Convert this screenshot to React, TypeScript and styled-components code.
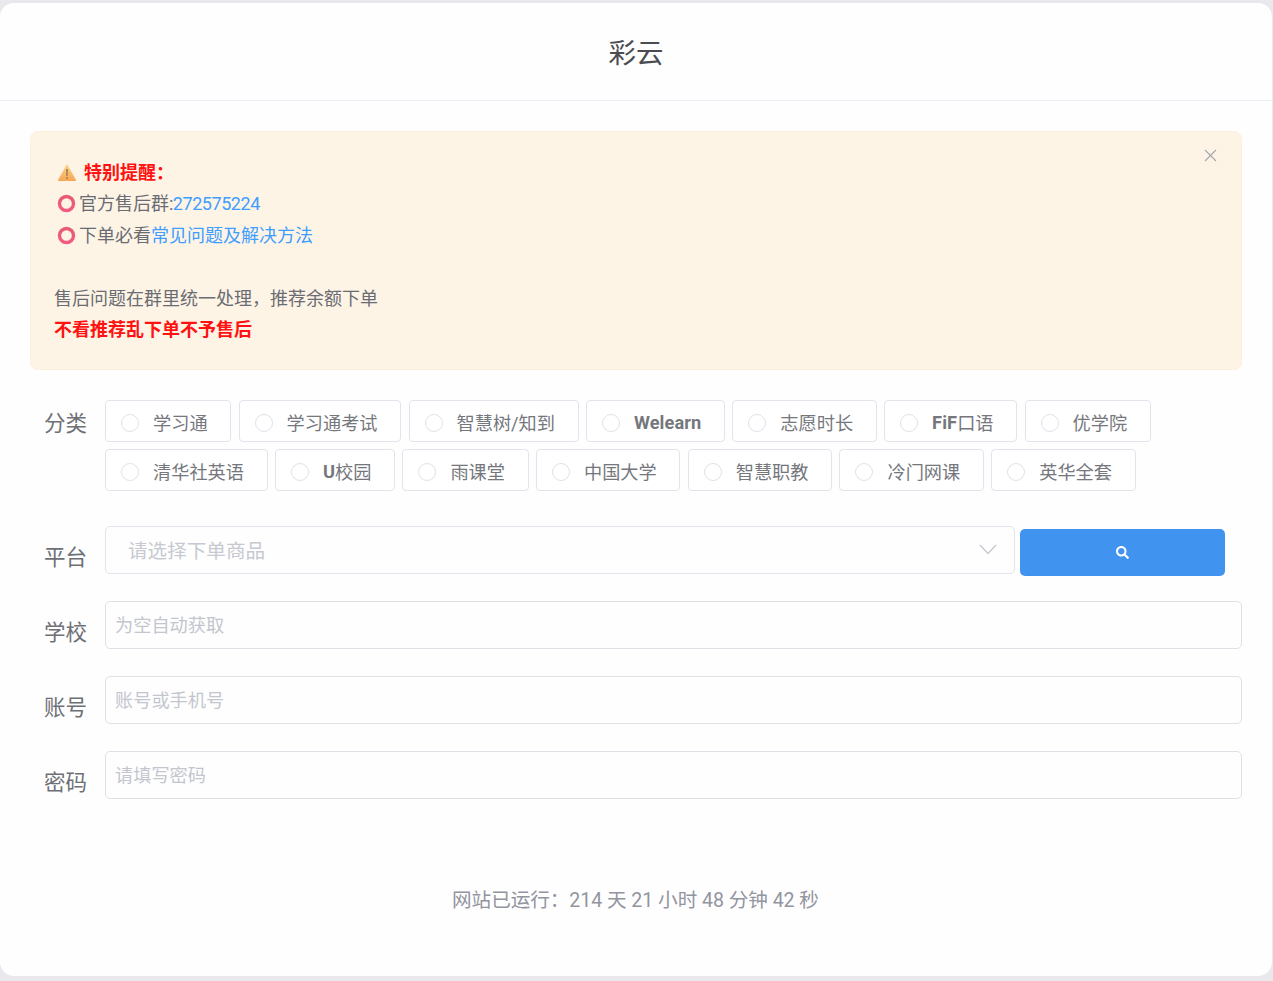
import styled, { createGlobalStyle } from 'styled-components';
import { FaSearch } from 'react-icons/fa';

const GlobalStyle = createGlobalStyle`
  * { box-sizing: border-box; }
  html, body { margin: 0; padding: 0; background: #e8e8ed; }
  body {
    font-family: Roboto, "Noto Sans CJK SC", sans-serif;
    color: #6a6c73;
  }
`;

const Page = styled.div`
  display: flex;
  height: 981px;
  overflow: hidden;
  padding: 3px 1px 5px 0;
`;

const Card = styled.main`
  flex: 1;
  display: flex;
  flex-direction: column;
  background: #fefefe;
  border-radius: 14px;
`;

const Header = styled.header`
  height: 98px;
  flex-shrink: 0;
  display: flex;
  align-items: center;
  justify-content: center;
  padding-bottom: 1px;
  border-bottom: 1px solid #eceef5;
  font-size: 27.5px;
  color: #4a4c52;
`;

const Body = styled.div`
  padding: 30px 30px 0;
`;

const Alert = styled.section`
  position: relative;
  height: 239px;
  padding: 24.5px 25px;
  background: #fef4e6;
  border: 1px solid #fcefdc;
  border-radius: 8px;
  font-size: 18px;
  line-height: 31.5px;
  margin-bottom: 30px;
`;

const Line = styled.div<{ $indent?: boolean }>`
  display: flex;
  align-items: center;
  height: 31.5px;
  margin-left: ${(p) => (p.$indent ? '1px' : '-2px')};
`;

const Strong = styled.strong`
  color: #ff1212;
  font-weight: 700;
`;

const Link = styled.a`
  color: #409eff;
`;

const Digits = styled(Link)`
  margin-left: -0.5px;
  letter-spacing: -0.45px;
`;

const CloseIcon = styled.svg`
  position: absolute;
  top: 17px;
  right: 24px;
  width: 13px;
  height: 13px;
`;

const Row = styled.div<{ $mb: number }>`
  display: flex;
  padding-left: 14px;
  margin-bottom: ${(p) => p.$mb}px;
`;

const Label = styled.label<{ $offset: number }>`
  flex: 0 0 61px;
  font-size: 21.5px;
  line-height: 32px;
  color: #6e7076;
  margin-top: ${(p) => p.$offset}px;
`;

const Options = styled.div`
  flex: 1;
  display: flex;
  flex-wrap: wrap;
  gap: 7px 7.3px;
  padding-right: 80px;
`;

const Option = styled.div`
  display: flex;
  align-items: center;
  height: 42px;
  padding: 2px 22.7px 0 15px;
  background: #fff;
  border: 1px solid #e2e4ec;
  border-radius: 4px;
  font-size: 18.2px;
  color: #75777d;
  white-space: nowrap;
`;

const Latin = styled.b`
  font-weight: 700;
  letter-spacing: 0.1px;
`;

const Circle = styled.span`
  width: 18px;
  height: 18px;
  margin: 2px 14px 0 0;
  border: 1px solid #e0e2ea;
  border-radius: 50%;
  background: #fff;
  flex-shrink: 0;
`;

const SelectRow = styled.div`
  flex: 1;
  display: flex;
  align-items: flex-start;
  padding-right: 17px;
`;

const Select = styled.div`
  flex: 1;
  display: flex;
  align-items: center;
  justify-content: space-between;
  height: 48px;
  padding: 0 17px 1px 22px;
  border: 1px solid #e2e4ec;
  border-radius: 5px;
  font-size: 19.6px;
  color: #c6c9d1;
`;

const SearchButton = styled.button`
  flex: 0 0 205px;
  height: 47px;
  margin: 3px 0 0 5px;
  display: flex;
  align-items: center;
  justify-content: center;
  background: #4094f0;
  border: 0;
  border-radius: 5px;
  color: #fff;
  font-size: 13px;
`;

const Input = styled.input`
  flex: 1;
  height: 48px;
  padding: 0 9px;
  background: transparent;
  border: 1px solid #dfe1e6;
  border-radius: 5px;
  font-family: inherit;
  font-size: 18.2px;
  color: #606266;
  &::placeholder {
    color: #c3c6ce;
    opacity: 1;
  }
`;

const Footer = styled.footer`
  margin-top: 74px;
  text-align: center;
  font-size: 19.6px;
  line-height: 56px;
  letter-spacing: -0.05px;
  color: #92959f;
  padding-right: 1px;
`;

const WarningIcon = () => (
  <svg width="20" height="18" viewBox="0 0 20 18" style={{ marginRight: 7, marginBottom: 1 }}>
    <defs>
      <linearGradient id="warn" x1="0" y1="0" x2="0" y2="1">
        <stop offset="0" stopColor="#fcd68a" />
        <stop offset="1" stopColor="#f6a655" />
      </linearGradient>
    </defs>
    <path d="M10 1 L19 17 Q19.4 18 18 18 L2 18 Q0.6 18 1 17 Z" fill="url(#warn)" />
    <path d="M9.4 6 H10.6 L10.4 13 H9.6 Z M9.4 14.2 H10.6 V15.8 H9.4 Z" fill="#6b5a4a" />
  </svg>
);

const RingIcon = () => (
  <svg width="19" height="19" viewBox="0 0 19 19" style={{ marginRight: 3, flexShrink: 0 }}>
    <defs>
      <linearGradient id="ring" x1="0" y1="0" x2="0" y2="1">
        <stop offset="0" stopColor="#e95a70" />
        <stop offset="1" stopColor="#f25c82" />
      </linearGradient>
    </defs>
    <circle cx="9.5" cy="9.5" r="7" fill="none" stroke="url(#ring)" strokeWidth="3.4" />
  </svg>
);

const categories = [
  { id: 'cx', name: '学习通' },
  { id: 'cxks', name: '学习通考试' },
  { id: 'zhs', name: '智慧树/知到' },
  { id: 'welearn', latin: 'Welearn', name: '' },
  { id: 'zysc', name: '志愿时长' },
  { id: 'fif', latin: 'FiF', name: '口语' },
  { id: 'yxy', name: '优学院' },
  { id: 'qhs', name: '清华社英语' },
  { id: 'u', latin: 'U', name: '校园' },
  { id: 'ykt', name: '雨课堂' },
  { id: 'zgdx', name: '中国大学' },
  { id: 'zhzj', name: '智慧职教' },
  { id: 'lm', name: '冷门网课' },
  { id: 'yh', name: '英华全套' },
];

export default function App() {
  return (
    <Page>
      <GlobalStyle />
      <Card>
        <Header>彩云</Header>
        <Body>
          <Alert>
            <CloseIcon viewBox="0 0 13 13">
              <path d="M1 1 L12 12 M12 1 L1 12" stroke="#a5a7ad" strokeWidth="1.1" fill="none" />
            </CloseIcon>
            <Line $indent>
              <WarningIcon />
              <Strong>特别提醒：</Strong>
            </Line>
            <Line $indent>
              <RingIcon />
              官方售后群:<Digits>272575224</Digits>
            </Line>
            <Line $indent>
              <RingIcon />
              下单必看<Link>常见问题及解决方法</Link>
            </Line>
            <Line />
            <Line>售后问题在群里统一处理，推荐余额下单</Line>
            <Line>
              <Strong>不看推荐乱下单不予售后</Strong>
            </Line>
          </Alert>

          <Row $mb={35}>
            <Label $offset={8}>分类</Label>
            <Options>
              {categories.map((c) => (
                <Option key={c.id}>
                  <Circle />
                  {c.latin && <Latin>{c.latin}</Latin>}
                  {c.name}
                </Option>
              ))}
            </Options>
          </Row>

          <Row $mb={25}>
            <Label $offset={16}>平台</Label>
            <SelectRow>
              <Select>
                请选择下单商品
                <svg width="18" height="11" viewBox="0 0 18 11">
                  <path d="M1 1 L9 9.5 L17 1" stroke="#c6c8d0" strokeWidth="1.3" fill="none" />
                </svg>
              </Select>
              <SearchButton aria-label="搜索">
                <FaSearch />
              </SearchButton>
            </SelectRow>
          </Row>

          <Row $mb={27}>
            <Label $offset={16}>学校</Label>
            <Input placeholder="为空自动获取" />
          </Row>
          <Row $mb={27}>
            <Label $offset={16}>账号</Label>
            <Input placeholder="账号或手机号" />
          </Row>
          <Row $mb={0}>
            <Label $offset={16}>密码</Label>
            <Input placeholder="请填写密码" />
          </Row>

          <Footer>网站已运行：214 天 21 小时 48 分钟 42 秒</Footer>
        </Body>
      </Card>
    </Page>
  );
}
